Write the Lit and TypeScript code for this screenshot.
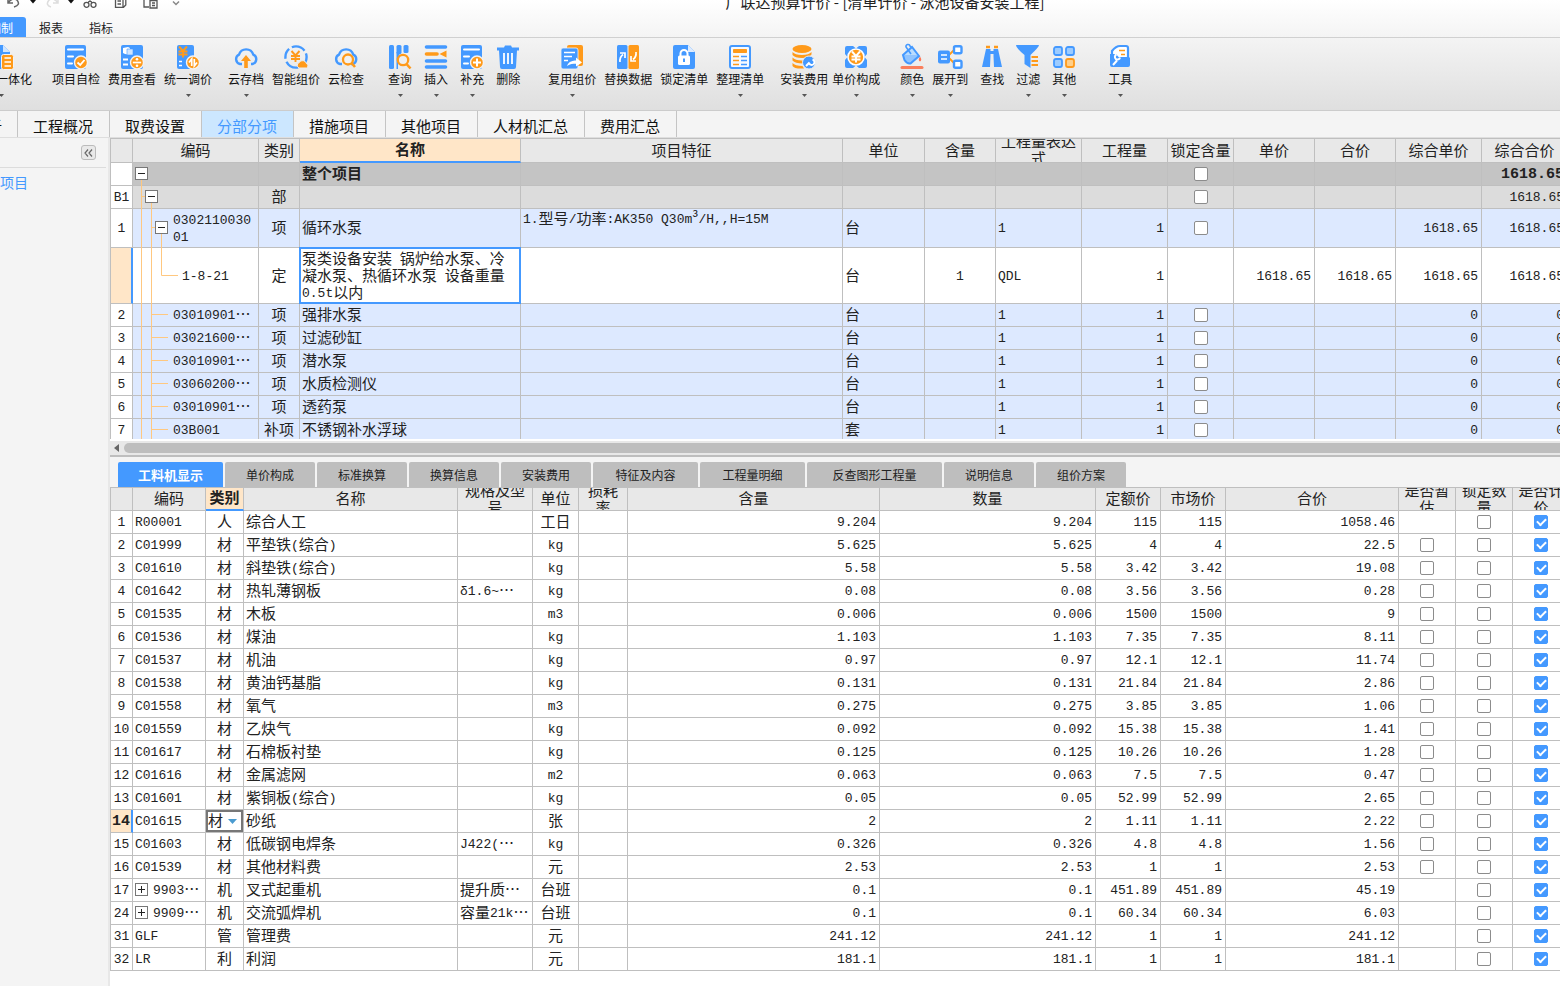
import { LitElement, html, svg, css, nothing, TemplateResult } from "lit";
import { customElement } from "lit/decorators.js";
import { classMap } from "lit/directives/class-map.js";

const B = "#4499ff";
const O = "#ff9a1a";

const cloud = svg`<path d="M8 19H6a5 5 0 0 1-1-9.400a7.500 7.500 0 0 1 14.300 0A5 5 0 0 1 18.500 19H17" fill="none" stroke=${B} stroke-width="2.400"/>`;
const yen = (x: number, y: number, c: string) =>
  svg`<path transform="translate(${x} ${y})" d="M-4-5L0-.5L4-5M0-.5V6M-4.500 0H4.500M-4.500 3H4.500" fill="none" stroke=${c} stroke-width="1.900"/>`;
const badge = svg`<circle cx="17" cy="17.500" r="6.500" fill=${O} stroke="#f3f3f3" stroke-width="1.400"/>`;
const sheet = svg`<rect x="1" width="21" height="24" rx="2" fill=${B}/><path d="M4 4.500H19M4 11.500H9M4 18.500H8" stroke="#fff" stroke-width="2" stroke-linecap="round"/>`;

const ICONS: Record<string, TemplateResult> = {
  merge: svg`<path d="M2 0H13L20 7V24H2Z" fill=${B}/><path d="M13 0V7H20Z" fill="#cfe5ff"/><rect x="11.500" y="9.500" width="12" height="15" rx="2" fill=${O} stroke="#f3f3f3"/><path d="M14.500 13H21M14.500 17H21M14.500 21H21" stroke="#fff" stroke-width="1.500"/>`,
  check: svg`${sheet}${badge}<path d="M13.500 17.500L16.200 20L20.500 15" fill="none" stroke="#fff" stroke-width="1.900"/>`,
  fee: svg`<rect x="1" width="22" height="24" rx="2" fill=${B}/><path d="M3 3l5-1 2 1v7l-5-1-2-1z" fill="#fff"/><path d="M7 4h6v6H7z" fill="#cfe5ff" stroke=${B} stroke-width=".6"/><path d="M3 14.500H8M3 19.500H8" stroke="#fff" stroke-width="2"/>${badge}<path d="M12.800 17.500H21.200" stroke="#fff" stroke-width="1.700"/><circle cx="17" cy="14.300" r="1.300" fill="#fff"/><circle cx="17" cy="20.700" r="1.300" fill="#fff"/>`,
  adjust: svg`<rect x="1" width="17" height="24" rx="2" fill=${B}/>${yen(7, 6.500, O)}<path d="M3 16.500H6M3 20.500H6" stroke="#fff" stroke-width="1.700"/>${badge}<path d="M15.700 21V14L13 17.500M18.300 14V21L21 17.500" fill="none" stroke="#fff" stroke-width="1.700"/>`,
  upload: svg`${cloud}<path d="M12 10L17 16H13.800V23H10.200V16H7Z" fill=${O}/>`,
  smart: svg`<circle cx="12" cy="12" r="10.600" fill="none" stroke=${B} stroke-width="2.400" stroke-dasharray="11 3.200 14 3"/>${yen(11.500, 11, O)}<path d="M15 23a3 3 0 0 1 .2-5.500a4 4 0 0 1 7.300 1.200A2.300 2.300 0 0 1 22.500 23Z" fill=${O} stroke="#eee" stroke-width="1"/>`,
  cloudfind: svg`${cloud}<circle cx="14" cy="14.500" r="5" fill="#f1f1f1" stroke=${O} stroke-width="2.300"/><path d="M17.500 18L21 22" stroke=${O} stroke-width="2.600"/>`,
  query: svg`<rect x="1" width="5" height="24" rx="1.500" fill=${B}/><rect x="8.500" width="5" height="9" rx="1.500" fill=${B}/><path d="M8.500 7H13L10 12V24H8.500Z" fill=${B}/><rect x="15.500" width="5" height="8" rx="1.500" fill=${B}/><circle cx="15" cy="15" r="5.200" fill="#efefef" stroke=${O} stroke-width="2.300"/><path d="M18.500 19L22.500 23.500" stroke=${O} stroke-width="2.600"/>`,
  insert: svg`<path d="M2.500 2H21.500M2.500 16H21.500M2.500 22H21.500" stroke=${B} stroke-width="3.600" stroke-linecap="round"/><path d="M2.500 9H13" stroke=${O} stroke-width="3.600" stroke-linecap="round"/><path d="M15.500 9L22.500 5.500V12.500Z" fill=${O}/>`,
  add: svg`${sheet}${badge}<path d="M13 17.500H21M17 13.500V21.500" stroke="#fff" stroke-width="2"/>`,
  trash: svg`<path d="M1 2.500H8L9 .5H15L16 2.500H23V5.500H21L20 22a2 2 0 0 1-2 2H6a2 2 0 0 1-2-2L3 5.500H1Z" fill=${B}/><path d="M8 8V19M12 8V19M16 8V19" stroke="#fff" stroke-width="1.800"/>`,
  reuse: svg`<rect x="7" width="16" height="21" rx="2" fill=${O}/><rect x="1" y="3" width="17" height="21" rx="2" fill=${B} stroke="#f3f3f3" stroke-width=".8"/><path d="M4 7.500H15M4 11.500H12M4 15.500H8" stroke="#fff" stroke-width="1.700"/><path d="M7 21C9 16 13 15.500 16 15.500V12.500L22 17.500L16 21.500V18.800C13 18.800 10 19 7 21Z" fill="#fff"/>`,
  swap: svg`<rect x="1" width="10.500" height="24" rx="1.500" fill=${B}/><rect x="12.500" width="10.500" height="24" rx="1.500" fill=${O}/><path d="M4 17C3.500 13 5 11 7 9.500M4 8H9V13M20 7C20.500 11 19 13 17 14.500M20 16H15V11" fill="none" stroke="#fff" stroke-width="1.700"/>`,
  lock: svg`<path d="M3 0H16L23 7V22a2 2 0 0 1-2 2H3a2 2 0 0 1-2-2V2a2 2 0 0 1 2-2Z" fill=${B}/><path d="M16 0V7H23Z" fill="#dcebff"/><rect x="6" y="10.500" width="12" height="9.500" rx="1.500" fill="#fff"/><path d="M8.500 11V8.500a3.500 3.500 0 0 1 7 0V11" fill="none" stroke="#fff" stroke-width="2"/><path d="M12 13.500V17" stroke=${B} stroke-width="2"/>`,
  sort: svg`<rect x="2" y="1" width="20" height="22" rx="2" fill="#f5f9ff" stroke=${B} stroke-width="2"/><rect x="5" y="4" width="14" height="4" rx=".8" fill=${O}/><path d="M5 11.500H11M5 15.500H11M5 19.500H11" stroke=${O} stroke-width="1.700"/><path d="M13 11.500H19M13 15.500H19M13 19.500H19" stroke=${B} stroke-width="1.700"/>`,
  install: svg`<ellipse cx="10" cy="4" rx="9.500" ry="4" fill=${O}/><path d="M.5 7Q3 10 10 10T19.500 7V9.500Q17 13 10 13T.5 10ZM.5 12.500Q3 15.500 10 15.500L13 15.300 11 18.500Q3 18.500 .5 15.500ZM.5 18Q3 21 10.500 21L12 23.500Q2 24 .5 21Z" fill=${O}/><circle cx="17" cy="17.500" r="6.500" fill=${B} stroke="#eee"/><path d="M14 21L17.500 17.500M20.500 14.500a2.800 2.800 0 1 1-3.500 3.500" fill="none" stroke="#fff" stroke-width="2"/>`,
  compose: svg`<path d="M1 3a2 2 0 0 1 2-2H9L12 3.500 15 1h6a2 2 0 0 1 2 2V9L20.500 12 23 15v6a2 2 0 0 1-2 2H15L12 20.500 9 23H3a2 2 0 0 1-2-2V15L3.500 12 1 9Z" fill=${B}/><circle cx="12" cy="12" r="8" fill=${O} stroke="#fff" stroke-width="1.600"/>${yen(12, 11.500, "#fff")}`,
  color: svg`<path d="M3 10L12 2L19 11L10.500 18.500Q7 19 4.500 15Z" fill="#b9dcff" stroke=${B} stroke-width="2"/><path d="M3 10H18.500L10.500 18.500Q7 19 4.500 15Z" fill=${B} opacity=".35"/><path d="M11 9L6 2a2 2 0 0 1 4-1l2 2" fill="none" stroke=${B} stroke-width="1.600"/><path d="M20 11.500Q22.500 15 20 16.500Q17.500 15 20 11.500Z" fill="#ff7755"/><path d="M2 22.500H22" stroke="#fa7f5c" stroke-width="3" stroke-linecap="round"/>`,
  expand: svg`<path d="M10 11L16 5M10 12L16 18" stroke=${O} stroke-width="1.800"/><rect y="5.500" width="12" height="13" rx="2" fill=${B}/><path d="M3 10H9M3 14H9" stroke="#fff" stroke-width="1.500"/><rect x="16" y="1.200" width="7.500" height="7" rx="1.500" fill="#fff" stroke=${B} stroke-width="2.400"/><rect x="16" y="15.800" width="7.500" height="7" rx="1.500" fill="#fff" stroke=${B} stroke-width="2.400"/>`,
  find: svg`<path d="M6 2H10M14 2H18" stroke=${O} stroke-width="2.400"/><path d="M6 4H10.500V11L10 22H2Z M18 4H13.500V11L14 22H22Z" fill=${B}/><path d="M10 7.500H14" stroke=${B} stroke-width="3"/>`,
  filter: svg`<path d="M0 0H23Q23 2 14.500 10V23L8.500 19V10Q0 3 0 0Z" fill=${B}/><path d="M15.500 12H22M15.500 16H22M15.500 20H22" stroke=${O} stroke-width="1.800"/>`,
  others: svg`<g fill="#9dccff" stroke=${B} stroke-width="1.800"><rect x="2" y="2" width="8" height="8" rx="2"/><rect x="14" y="2" width="8" height="8" rx="2"/><rect x="2" y="14" width="8" height="8" rx="2"/></g><rect x="14" y="14" width="8" height="8" rx="2" fill="#ffcf8a" stroke=${O} stroke-width="1.800"/>`,
  tools: svg`<path d="M4 9V6Q8 1 12 1H18a2 2 0 0 1 2 2V13H4Z" fill="#fff" stroke=${B} stroke-width="2.200"/><path d="M11 5.500H17M13 9.500H17" stroke=${O} stroke-width="1.700"/><path d="M2 9H8L11 12.500H22V20a2 2 0 0 1-2 2H4a2 2 0 0 1-2-2Z" fill=${B}/><path d="M5 20L9 15.500M12 12.500a2.600 2.600 0 1 1-3.500-3" fill="none" stroke="#fff" stroke-width="2"/>`,
};

type Tool = [label: string, icon: string, menu?: boolean];
interface ToolGroup { gap: string; items: Tool[] }
const TOOLS: ToolGroup[] = [
  { gap: "g8 lead20", items: [["项目自检", "check"], ["费用查看", "fee"], ["统一调价", "adjust", true]] },
  { gap: "g8 lead16", items: [["云存档", "upload", true], ["智能组价", "smart"], ["云检查", "cloudfind"]] },
  { gap: "g12 lead24", items: [["查询", "query", true], ["插入", "insert", true], ["补充", "add", true], ["删除", "trash"]] },
  { gap: "g8 lead28", items: [["复用组价", "reuse", true], ["替换数据", "swap"], ["锁定清单", "lock"], ["整理清单", "sort", true]] },
  { gap: "g4 lead16", items: [["安装费用", "install", true], ["单价构成", "compose", true]] },
  { gap: "g8 lead20", items: [["颜色", "color", true], ["展开到", "expand", true]] },
  { gap: "g12 lead12", items: [["查找", "find"], ["过滤", "filter", true], ["其他", "others", true]] },
  { gap: "g8 lead32", items: [["工具", "tools", true]] },
];

const NAV = ["造价分析", "工程概况", "取费设置", "分部分项", "措施项目", "其他项目", "人材机汇总", "费用汇总"];
const DETAIL_TABS = ["工料机显示", "单价构成", "标准换算", "换算信息", "安装费用", "特征及内容", "工程量明细", "反查图形工程量", "说明信息", "组价方案"];

// A zero width marks the column that takes up the remaining space.
const BILL_COLS: [string, number][] = [["", 22], ["编码", 126], ["类别", 41], ["名称", 221], ["项目特征", 0], ["单位", 82], ["含量", 71], ["工程量表达式", 86], ["工程量", 86], ["锁定含量", 66], ["单价", 81], ["合价", 81], ["综合单价", 86], ["综合合价", 86]];
const RES_COLS: [string, number][] = [["", 22], ["编码", 73], ["类别", 38], ["名称", 214], ["规格及型号", 75], ["单位", 46], ["损耗率", 49], ["含量", 0], ["数量", 216], ["定额价", 65], ["市场价", 65], ["合价", 173], ["是否暂估", 57], ["锁定数量", 57], ["是否计价", 57]];

interface Bill {
  no: string; code: string; kind: string; name: string; feature?: string; unit?: string;
  content?: string; expr?: string; qty?: string; lock: boolean; price?: string; total?: string;
  uPrice?: string; uTotal: string; type: "root" | "part" | "open" | "quota" | "item";
}
const item = (no: string, code: string, name: string, kind = "项", unit = "台"): Bill =>
  ({ no, code, kind, name, unit, expr: "1", qty: "1", lock: true, uPrice: "0", uTotal: "0", type: "item" });
const BILLS: Bill[] = [
  { no: "", code: "", kind: "", name: "整个项目", lock: true, uTotal: "1618.65", type: "root" },
  { no: "B1", code: "", kind: "部", name: "", lock: true, uTotal: "1618.65", type: "part" },
  { no: "1", code: "030211003001", kind: "项", name: "循环水泵", feature: "1.型号/功率:AK350 Q30m³/H,,H=15M", unit: "台", expr: "1", qty: "1", lock: true, uPrice: "1618.65", uTotal: "1618.65", type: "open" },
  { no: "", code: "1-8-21", kind: "定", name: "泵类设备安装 锅炉给水泵、冷凝水泵、热循环水泵 设备重量0.5t以内", unit: "台", content: "1", expr: "QDL", qty: "1", lock: false, price: "1618.65", total: "1618.65", uPrice: "1618.65", uTotal: "1618.65", type: "quota" },
  item("2", "03010901⋯", "强排水泵"),
  item("3", "03021600⋯", "过滤砂缸"),
  item("4", "03010901⋯", "潜水泵"),
  item("5", "03060200⋯", "水质检测仪"),
  item("6", "03010901⋯", "透药泵"),
  item("7", "03B001", "不锈钢补水浮球", "补项", "套"),
];

// no, code, kind, name, spec, unit, content, quantity, base price, market price, total, has estimate box
type Res = [string, string, string, string, string, string, string, string, string, string, string, boolean];
const RESOURCES: Res[] = [
  ["1", "R00001", "人", "综合人工", "", "工日", "9.204", "9.204", "115", "115", "1058.46", false],
  ["2", "C01999", "材", "平垫铁(综合)", "", "kg", "5.625", "5.625", "4", "4", "22.5", true],
  ["3", "C01610", "材", "斜垫铁(综合)", "", "kg", "5.58", "5.58", "3.42", "3.42", "19.08", true],
  ["4", "C01642", "材", "热轧薄钢板", "δ1.6~⋯", "kg", "0.08", "0.08", "3.56", "3.56", "0.28", true],
  ["5", "C01535", "材", "木板", "", "m3", "0.006", "0.006", "1500", "1500", "9", true],
  ["6", "C01536", "材", "煤油", "", "kg", "1.103", "1.103", "7.35", "7.35", "8.11", true],
  ["7", "C01537", "材", "机油", "", "kg", "0.97", "0.97", "12.1", "12.1", "11.74", true],
  ["8", "C01538", "材", "黄油钙基脂", "", "kg", "0.131", "0.131", "21.84", "21.84", "2.86", true],
  ["9", "C01558", "材", "氧气", "", "m3", "0.275", "0.275", "3.85", "3.85", "1.06", true],
  ["10", "C01559", "材", "乙炔气", "", "kg", "0.092", "0.092", "15.38", "15.38", "1.41", true],
  ["11", "C01617", "材", "石棉板衬垫", "", "kg", "0.125", "0.125", "10.26", "10.26", "1.28", true],
  ["12", "C01616", "材", "金属滤网", "", "m2", "0.063", "0.063", "7.5", "7.5", "0.47", true],
  ["13", "C01601", "材", "紫铜板(综合)", "", "kg", "0.05", "0.05", "52.99", "52.99", "2.65", true],
  ["14", "C01615", "材", "砂纸", "", "张", "2", "2", "1.11", "1.11", "2.22", true],
  ["15", "C01603", "材", "低碳钢电焊条", "J422(⋯", "kg", "0.326", "0.326", "4.8", "4.8", "1.56", true],
  ["16", "C01539", "材", "其他材料费", "", "元", "2.53", "2.53", "1", "1", "2.53", true],
  ["17", "9903⋯", "机", "叉式起重机", "提升质⋯", "台班", "0.1", "0.1", "451.89", "451.89", "45.19", false],
  ["24", "9909⋯", "机", "交流弧焊机", "容量21k⋯", "台班", "0.1", "0.1", "60.34", "60.34", "6.03", false],
  ["31", "GLF", "管", "管理费", "", "元", "241.12", "241.12", "1", "1", "241.12", false],
  ["32", "LR", "利", "利润", "", "元", "181.1", "181.1", "1", "1", "181.1", false],
];

const mix = (s = "") =>
  s.split(/([\x20-\x7eδ]+|⋯)/).map((t, i) =>
    !t ? nothing : t === "⋯" ? html`<span class="dots">⋯</span>` : i % 2 ? html`<span class="latin">${t}</span>` : t);

const toggleBox = (x: number, y: number, plus = false) => svg`
  <rect x=${x + 0.5} y=${y + 0.5} width="12" height="12" fill="#fff" stroke="#777"/>
  <path d="M${x + 3} ${y + 6.5}H${x + 10}${plus ? `M${x + 6.5} ${y + 3}V${y + 10}` : ""}" stroke="#222"/>`;

const TREE: Record<Bill["type"], { w: number; h: number; lines: string; box?: [number, number] }> = {
  root: { w: 40, h: 22, lines: "M8.500 17V23", box: [2, 4] },
  part: { w: 40, h: 22, lines: "M8.500 0V23M8.500 10.500H12M18.500 17V23", box: [12, 4] },
  open: { w: 40, h: 38, lines: "M8.500 0V39M18.500 0V39M18.500 18.500H22M28.500 25V39", box: [22, 12] },
  quota: { w: 49, h: 55, lines: "M8.500 0V56M18.500 0V56M28.500 0V27.500H45" },
  item: { w: 40, h: 22, lines: "M8.500 0V23M18.500 0V23M18.500 10.500H35" },
};

@customElement("app-root")
export class AppRoot extends LitElement {
  static styles = css`
    :host {
      display: flex; flex-direction: column; height: 100vh; overflow: hidden;
      font-family: "Noto Sans CJK SC", "Liberation Sans", sans-serif;
      font-size: 15px; line-height: 17px; color: #222; background: #f4f4f4;
    }
    * { box-sizing: border-box; }
    button { font: inherit; color: inherit; background: none; border: 0; padding: 0; margin: 0; white-space: nowrap; }
    svg { display: block; flex: none; overflow: visible; }
    .top { flex: none; background: linear-gradient(#fff, #f3f3f3 40px, #dfdfdf); border-bottom: 1px solid #ccc; }
    .title { display: flex; height: 17px; overflow: hidden; }
    .quick { display: flex; align-items: flex-end; flex: 0 0 210px; height: 12px; padding-left: 6px; gap: 8px; }
    .clip { display: flex; align-items: flex-end; gap: 14px; }
    .quick button { display: flex; justify-content: center; }
    .quick .pic { width: 16px; }
    .name { flex: 1; align-self: flex-end; margin: 0; padding-bottom: 5px; font-size: 15px; font-weight: 400; line-height: 20px; text-align: center; white-space: nowrap; }
    .menu { display: flex; height: 21px; border-bottom: 1px solid #d0d0d0; font-size: 12px; }
    .menu button { width: 50px; height: 20px; }
    .menu .on { width: 26px; display: flex; justify-content: flex-end; align-items: center; padding-right: 13px; background: #4499ff; color: #fff; border-radius: 0 3px 0 0; overflow: hidden; }
    .tools { display: flex; height: 72px; padding-top: 7px; overflow: hidden; font-size: 12px; color: #111; }
    .group { display: flex; align-items: flex-start; }
    .g4 { gap: 4px; } .g8 { gap: 8px; } .g12 { gap: 12px; }
    .lead12 { margin-left: 12px; } .lead16 { margin-left: 16px; } .lead20 { margin-left: 20px; }
    .lead24 { margin-left: 24px; } .lead28 { margin-left: 28px; } .lead32 { margin-left: 32px; }
    .edge { width: 32px; justify-content: flex-end; }
    .tool { display: flex; flex-direction: column; align-items: center; flex: none; }
    .tool span { margin-top: 1px; line-height: 18px; }
    .tool .caret { margin-top: 6px; }
    .nav { display: flex; flex: none; height: 27px; overflow: hidden; border-bottom: 1px solid #dedede; }
    .nav button { flex: none; padding: 2px 16px 0 15px; border-right: 1px solid #c4c4c4; color: #111; }
    .nav .cut { width: 18px; display: flex; justify-content: flex-end; align-items: center; padding: 2px 15px 0 0; }
    .nav .on { background: #cce7ff; color: #4499ff; }
    .main { display: flex; flex: 1; min-height: 0; }
    .side { flex: 0 0 110px; border-right: 2px solid #e8e8e8; overflow: hidden; }
    .sidehead { display: flex; justify-content: flex-end; height: 30px; padding: 7px 10px 0 0; margin-right: 2px; border-bottom: 1px solid #dcdcdc; }
    .fold { display: grid; place-items: center; width: 15px; height: 15px; border: 1px solid #bbb; border-radius: 3px; background: #e9e9e9; }
    .root { display: flex; justify-content: flex-end; width: 28px; padding-top: 6px; font-size: 14px; color: #4499ff; text-decoration: none; white-space: nowrap; }
    .work { display: flex; flex-direction: column; flex: 1; min-width: 0; background: #fff; overflow: hidden; }
    .pane { flex: 0 0 301px; overflow: hidden; }
    .rest { flex: 1; min-height: 0; overflow: hidden; }
    table { table-layout: fixed; border-collapse: separate; border-spacing: 0; border-top: 1px solid #bfbfbf; border-left: 1px solid #bfbfbf; }
    .bills { width: calc(100% + 8px); }
    .res { width: calc(100% + 10px); }
    th, td { padding: 0 3px 3px 2px; border-right: 1px solid #bfbfbf; border-bottom: 1px solid #bfbfbf; text-align: left; font-weight: 400; white-space: nowrap; overflow: hidden; }
    thead th { background: #e8e8e8; padding: 0; }
    .cap { display: flex; align-items: center; justify-content: center; height: 23px; padding: 0 5px 3px; overflow: hidden; text-align: center; white-space: normal; word-break: break-all; }
    .cap.tight { padding: 0 2px 3px; }
    .res .cap { height: 22px; }
    thead .hot { background: #ffe6c8; font-weight: 700; border-bottom: 2px solid #4499ff; }
    .hot .cap { height: 22px; padding: 0 2px 4px; }
    .res .hot .cap { height: 21px; }
    td, tbody th { height: 23px; }
    .latin { font-family: "Liberation Mono", monospace; font-size: 13px; line-height: 0; vertical-align: 1px; }
    .dots { display: inline-block; height: 17px; vertical-align: top; }
    .c { text-align: center; padding: 0 0 3px; }
    .k { padding: 0; }
    .r { text-align: right; }
    tbody th { text-align: center; padding: 0 0 3px; background: #fff; }
    tbody th.sel { background: #ffe6c8; border-right: 2px solid #4499ff; font-weight: 700; }
    .sel .latin, .root-row .latin { font-size: 15px; }
    .root-row td { background: #c4c4c4; font-weight: 700; }
    .part td { background: #dcdcdc; }
    .open td, .item td { background: #dde9ff; }
    .open td { height: 39px; }
    .quota td { height: 56px; }
    td.tree { padding: 0; overflow: visible; }
    .node { display: flex; align-items: center; white-space: normal; word-break: break-all; }
    .node span { flex: 0 1 auto; }
    .code { padding-bottom: 3px; }
    .top-text { vertical-align: top; }
    td.focus { position: relative; padding-right: 6px; white-space: normal; overflow: visible; }
    td.focus::after { content: ""; position: absolute; inset: -1px; border: 2px solid #4499ff; pointer-events: none; }
    input { appearance: none; display: block; width: 14px; height: 14px; margin: 0 auto; border: 1px solid #8c8c8c; border-radius: 2px; background: #fff; }
    input:checked { background: #4499ff; border-color: #4499ff; }
    input:checked::after { content: ""; display: block; box-sizing: border-box; width: 9px; height: 6px; margin: 2px auto 0; border: solid #fff; border-width: 0 0 2px 2px; transform: rotate(-45deg); }
    .bar { display: flex; align-items: center; flex: none; gap: 5px; height: 16px; margin-top: 2px; padding-left: 4px; background: #e8e8e8; border-bottom: 2px solid #bebebe; }
    .thumb { flex: 1; height: 10px; background: #bebebe; border-radius: 5px 0 0 5px; }
    .tabs { display: flex; flex: none; gap: 2px; height: 30px; padding: 5px 0 0 8px; background: #f4f4f4; font-size: 12px; }
    .tabs button { height: 25px; background: #bebebe; border-radius: 2px 2px 0 0; flex: none; }
    .tabs .on { background: #4499ff; color: #fff; font-size: 13px; font-weight: 700; }
    .pick { display: grid; align-items: center; height: 22px; border: 2px solid #777; }
    .pick > * { grid-area: 1 / 1; }
    .pick svg { justify-self: end; margin-right: 4px; pointer-events: none; }
    select { appearance: none; align-self: start; font: inherit; color: inherit; width: 100%; height: 18px; margin: -2px 0 0; padding: 0; border: 0; background: none; }
  `;

  private tool([label, icon, menu]: Tool) {
    return html`<button class="tool">
      <svg width="24" height="24" viewBox="0 0 24 24">${ICONS[icon]}</svg>
      <span>${label}</span>
      ${menu ? html`<svg class="caret" width="5" height="3"><path d="M0 0H5L2.500 3Z" fill="#555" /></svg>` : nothing}
    </button>`;
  }

  private head(cols: [string, number][], hot: string) {
    return html`<colgroup>${cols.map(([, w]) => (w ? html`<col style="width:${w}px" />` : html`<col />`))}</colgroup>
      <thead><tr>${cols.map(([t]) => html`<th scope="col" class=${classMap({ hot: t === hot })}>
        <div class=${classMap({ cap: true, tight: t === "锁定含量" })}>${t}</div></th>`)}</tr></thead>`;
  }

  private bill(b: Bill) {
    const t = TREE[b.type];
    return html`<tr class=${b.type === "root" ? "root-row" : b.type}>
      <th scope="row" class=${classMap({ sel: b.type === "quota" })}>${mix(b.no)}</th>
      <td class="tree"><div class="node">
        <svg width=${t.w} height=${t.h}><path d=${t.lines} fill="none" stroke="#ffc880" />${t.box ? toggleBox(t.box[0], t.box[1]) : nothing}</svg>
        <span class="code">${mix(b.code)}</span></div></td>
      <td class="c">${b.kind}</td>
      <td class=${classMap({ focus: b.type === "quota" })}>${mix(b.name)}</td>
      <td class="top-text">${mix(b.feature)}</td>
      <td>${b.unit}</td>
      <td class="c">${mix(b.content)}</td>
      <td>${mix(b.expr)}</td>
      <td class="r">${mix(b.qty)}</td>
      <td class="k">${b.lock ? html`<input type="checkbox" aria-label="锁定含量" />` : nothing}</td>
      <td class="r">${mix(b.price)}</td>
      <td class="r">${mix(b.total)}</td>
      <td class="r">${mix(b.uPrice)}</td>
      <td class="r">${mix(b.uTotal)}</td>
    </tr>`;
  }

  private resource(r: Res) {
    const active = r[0] === "14";
    return html`<tr>
      <th scope="row" class=${classMap({ sel: active })}>${mix(r[0])}</th>
      <td class=${classMap({ tree: r[2] === "机" })}>${r[2] === "机"
        ? html`<div class="node"><svg width="20" height="22">${toggleBox(2, 4, true)}</svg><span class="code">${mix(r[1])}</span></div>`
        : mix(r[1])}</td>
      <td class=${active ? "k" : "c"}>${active
        ? html`<div class="pick"><select aria-label="类别"><option>材</option><option>人</option><option>机</option></select>
            <svg width="9" height="5"><path d="M0 0H9L4.500 5Z" fill="#4a9bd0" /></svg></div>`
        : r[2]}</td>
      <td>${mix(r[3])}</td>
      <td>${mix(r[4])}</td>
      <td class="c">${mix(r[5])}</td>
      <td></td>
      ${r.slice(6, 11).map((v) => html`<td class="r">${mix(v as string)}</td>`)}
      <td class="k">${r[11] ? html`<input type="checkbox" aria-label="是否暂估" />` : nothing}</td>
      <td class="k"><input type="checkbox" aria-label="锁定数量" /></td>
      <td class="k"><input type="checkbox" aria-label="是否计价" checked /></td>
    </tr>`;
  }

  render() {
    const caret = html`<svg width="6" height="12" viewBox="0 0 6 12"><path d="M0 0H6L3 3.500Z" fill="#111" /></svg>`;
    return html`
      <header class="top">
        <div class="title">
          <div class="quick">
            <button class="pic" aria-label="撤销"><svg width="14" height="18" viewBox="0 0 14 18" fill="none" stroke="#666" stroke-width="1.500"><path d="M1 4V9H6M1 9Q5 3 10 6Q14 11 7 13" /></svg></button>
            <button aria-label="撤销列表">${caret}</button>
            <button class="pic" aria-label="恢复"><svg width="14" height="18" viewBox="0 0 14 18" fill="none" stroke="#ddd" stroke-width="1.500"><path d="M13 4V9H8M13 9Q9 3 4 6Q0 11 6 13" /></svg></button>
            <button aria-label="恢复列表">${caret}</button>
            <div class="clip">
              <button class="pic" aria-label="剪切"><svg width="14" height="18" viewBox="0 0 14 18" fill="none" stroke="#555" stroke-width="1.300"><circle cx="3.500" cy="10.800" r="2.500" /><circle cx="10.500" cy="10.800" r="2.500" /><path d="M2.500 0L9 8.800M11.500 0L5 8.800" /></svg></button>
              <button class="pic" aria-label="复制"><svg width="13" height="18" viewBox="0 0 13 18" fill="none" stroke="#555" stroke-width="1.300"><path d="M1.500 4V13.300H9.500L11.800 11V2M1.500 4H9V13M3.500 7H7M3.500 10H7" /></svg></button>
              <button class="pic" aria-label="粘贴"><svg width="15" height="18" viewBox="0 0 15 18" fill="none" stroke="#555" stroke-width="1.300"><path d="M6 13H1V2H11V5M7 6.500H14V14H7ZM9 9H12M9 11.500H12" /></svg></button>
              <button aria-label="更多"><svg width="8" height="12" viewBox="0 0 8 12" fill="none" stroke="#888" stroke-width="1.500"><path d="M1 1.500L4 4.500L7 1.500" /></svg></button>
            </div>
          </div>
          <h1 class="name">广联达预算计价 - [清单计价 - 泳池设备安装工程]</h1>
        </div>
        <div class="menu"><button class="on">编制</button><button>报表</button><button>指标</button></div>
        <div class="tools">
          <div class="group edge">${this.tool(["量价一体化", "merge", true])}</div>
          ${TOOLS.map((g) => html`<div class="group ${g.gap}">${g.items.map((t) => this.tool(t))}</div>`)}
        </div>
      </header>
      <nav class="nav">${NAV.map((t, i) => html`<button class=${classMap({ cut: i === 0, on: t === "分部分项" })}>${t}</button>`)}</nav>
      <div class="main">
        <aside class="side">
          <div class="sidehead"><button class="fold" aria-label="收起"><svg width="9" height="8" fill="none" stroke="#666" stroke-width="1.200"><path d="M4 0.500L1 4L4 7.500M8 0.500L5 4L8 7.500" /></svg></button></div>
          <a class="root" href="#">整个项目</a>
        </aside>
        <section class="work">
          <div class="pane"><table class="bills">${this.head(BILL_COLS, "名称")}<tbody>${BILLS.map((b) => this.bill(b))}</tbody></table></div>
          <div class="bar"><svg width="5" height="8"><path d="M5 0V8L0 4Z" fill="#666" /></svg><div class="thumb"></div></div>
          <div class="tabs">${DETAIL_TABS.map((t, i) => html`<button class=${classMap({ on: i === 0 })} style="width:${t.length * 15 + 30}px">${t}</button>`)}</div>
          <div class="rest"><table class="res">${this.head(RES_COLS, "类别")}<tbody>${RESOURCES.map((r) => this.resource(r))}</tbody></table></div>
        </section>
      </div>`;
  }
}
